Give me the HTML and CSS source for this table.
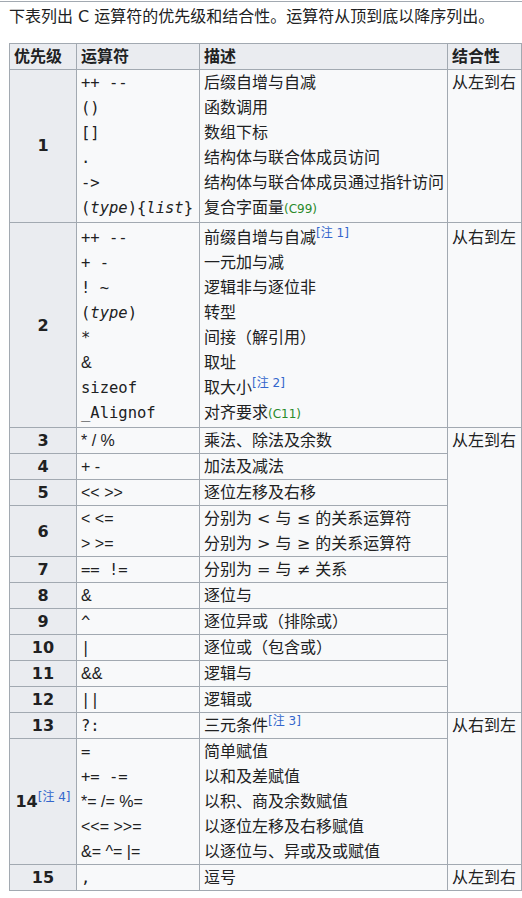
FILE: index.html
```html
<!DOCTYPE html>
<html lang="zh">
<head>
<meta charset="utf-8">
<link rel="stylesheet" href="styles.css">
</head>
<body>
<div class="rule"></div>
<p class="intro">下表列出 C 运算符的优先级和结合性。运算符从顶到底以降序列出。</p>
<table class="prec">
<colgroup><col class="c-pri"><col class="c-op"><col class="c-desc"><col class="c-assoc"></colgroup>
<thead>
<tr><th>优先级</th><th>运算符</th><th>描述</th><th>结合性</th></tr>
</thead>
<tbody>
<tr class="first">
<th class="pri">1</th>
<td><code>++ --</code><br><code>()</code><br><code>[]</code><br><code>.</code><br><code>-&gt;</code><br><code>(<i>type</i>){<i>list</i>}</code></td>
<td>后缀自增与自减<br>函数调用<br>数组下标<br>结构体与联合体成员访问<br>结构体与联合体成员通过指针访问<br>复合字面量<span class="std">(C99)</span></td>
<td>从左到右</td>
</tr>
<tr class="second">
<th class="pri">2</th>
<td><code>++ --</code><br><code>+ -</code><br><code>! ~</code><br><code>(<i>type</i>)</code><br><code>*</code><br><span class="sym">&amp;</span><br><code>sizeof</code><br><code>_Alignof</code></td>
<td>前缀自增与自减<sup class="note">[注 1]</sup><br>一元加与减<br>逻辑非与逐位非<br>转型<br>间接（解引用）<br>取址<br>取大小<sup class="note">[注 2]</sup><br>对齐要求<span class="std">(C11)</span></td>
<td>从右到左</td>
</tr>
<tr>
<th class="pri">3</th>
<td><span class="sym">* / %</span></td>
<td>乘法、除法及余数</td>
<td rowspan="10">从左到右</td>
</tr>
<tr><th class="pri">4</th><td><span class="sym">+ -</span></td><td>加法及减法</td></tr>
<tr><th class="pri">5</th><td><span class="sym">&lt;&lt; &gt;&gt;</span></td><td>逐位左移及右移</td></tr>
<tr><th class="pri">6</th><td><span class="sym">&lt; &lt;=</span><br><span class="sym">&gt; &gt;=</span></td><td>分别为 &lt; 与 ≤ 的关系运算符<br>分别为 &gt; 与 ≥ 的关系运算符</td></tr>
<tr><th class="pri">7</th><td><code>== !=</code></td><td>分别为 = 与 ≠ 关系</td></tr>
<tr><th class="pri">8</th><td><span class="sym">&amp;</span></td><td>逐位与</td></tr>
<tr><th class="pri">9</th><td><code>^</code></td><td>逐位异或（排除或）</td></tr>
<tr><th class="pri">10</th><td><code>|</code></td><td>逐位或（包含或）</td></tr>
<tr><th class="pri">11</th><td><span class="sym">&amp;&amp;</span></td><td>逻辑与</td></tr>
<tr><th class="pri">12</th><td><code>||</code></td><td>逻辑或</td></tr>
<tr>
<th class="pri">13</th>
<td><code>?:</code></td>
<td>三元条件<sup class="note">[注 3]</sup></td>
<td rowspan="2">从右到左</td>
</tr>
<tr>
<th class="pri">14<sup class="note">[注 4]</sup></th>
<td><code>=</code><br><code>+= -=</code><br><span class="sym">*= /= %=</span><br><span class="sym">&lt;&lt;= &gt;&gt;=</span><br><span class="sym">&amp;= ^= |=</span></td>
<td>简单赋值<br>以和及差赋值<br>以积、商及余数赋值<br>以逐位左移及右移赋值<br>以逐位与、异或及或赋值</td>
</tr>
<tr><th class="pri">15</th><td><code>,</code></td><td>逗号</td><td>从左到右</td></tr>
</tbody>
</table>
</body>
</html>
```

FILE: styles.css
```css
html, body {
  margin: 0;
}

body {
  background: #ffffff;
  color: #202122;
  font-family: "DejaVu Sans", "Noto Sans CJK SC", sans-serif;
  font-size: 16px;
  line-height: 25px;
  padding: 0 9px;
}

.rule {
  border-top: 1px solid #a2a9b1;
  margin: 1px -9px 0;
}

.intro {
  margin: 2px 0 14px;
}

.prec {
  border-collapse: collapse;
  table-layout: fixed;
  width: 512px;
  background: #f8f9fa;
}

.c-pri { width: 67px; }
.c-op { width: 123px; }
.c-desc { width: 248px; }
.c-assoc { width: 74px; }

.prec th,
.prec td {
  border: 1px solid #a2a9b1;
  padding: 0 4px;
  line-height: 25px;
  text-align: left;
  vertical-align: top;
  white-space: nowrap;
}

.prec thead th {
  background: #eaecf0;
  font-weight: bold;
}

.prec th.pri {
  background: #eaecf0;
  text-align: center;
  vertical-align: middle;
  font-weight: bold;
  padding: 0;
}

.prec tr.first > * {
  padding-bottom: 2px;
}

.prec tr.second > * {
  padding-top: 2px;
  padding-bottom: 2px;
}

code {
  font-family: "DejaVu Sans Mono", monospace;
  font-size: 15.5px;
  line-height: 1;
}

code i {
  font-style: italic;
}

.sym {
  font-family: "Liberation Sans", sans-serif;
  line-height: 1;
}

.note {
  font-size: 12px;
  font-weight: normal;
  line-height: 0;
  color: #3366cc;
  vertical-align: super;
}

.std {
  font-size: 12px;
  line-height: 1;
  color: #2a8a2a;
}
```
